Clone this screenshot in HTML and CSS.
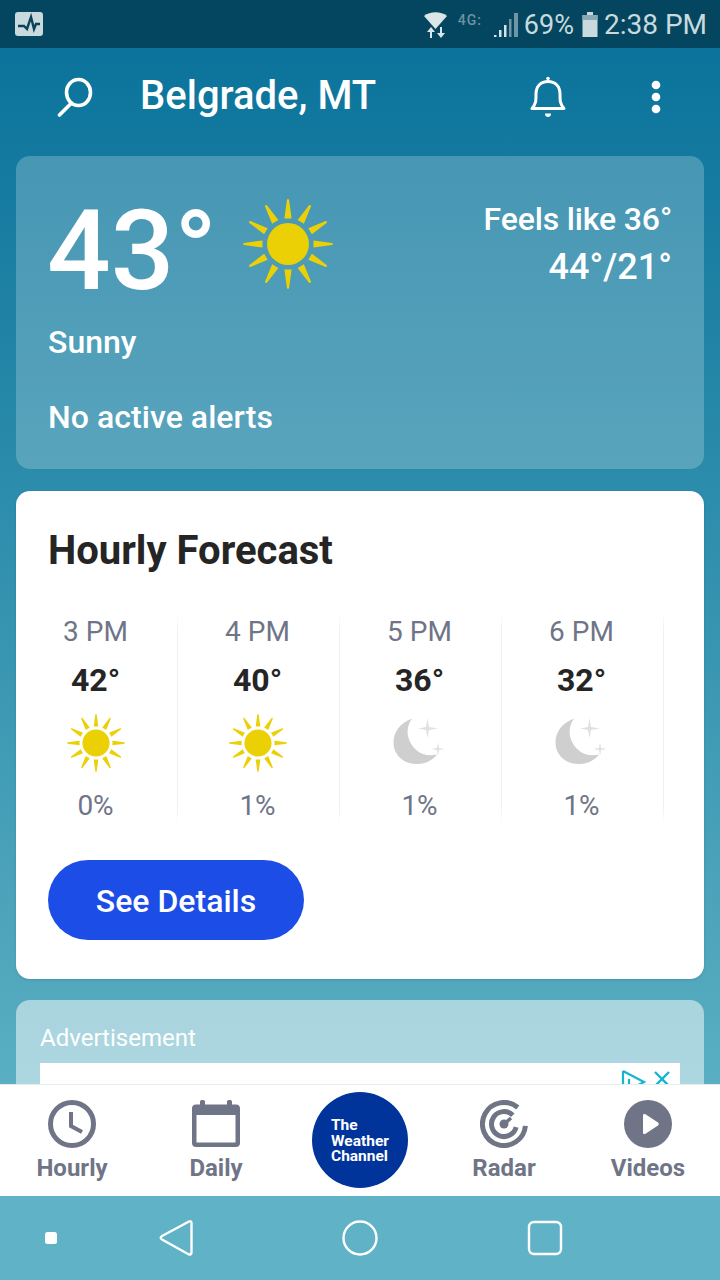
FILE: index.html
```html
<!DOCTYPE html>
<html lang="en">
<head>
<meta charset="utf-8">
<title>The Weather Channel</title>
<link rel="stylesheet" href="styles.css">
</head>
<body>
<svg class="defs" width="0" height="0" aria-hidden="true">
  <defs>
    <symbol id="sun" viewBox="-45 -45 90 90">
      <circle r="21" fill="#ebd006"/>
      <g fill="#ebd006">
        <path d="M-3.600-25.500H3.600L1.100-44Q0-46-1.100-44Z"/>
        <path d="M-3.600-25.500H3.600L1.100-44Q0-46-1.100-44Z" transform="rotate(30)"/>
        <path d="M-3.600-25.500H3.600L1.100-44Q0-46-1.100-44Z" transform="rotate(60)"/>
        <path d="M-3.600-25.500H3.600L1.100-44Q0-46-1.100-44Z" transform="rotate(90)"/>
        <path d="M-3.600-25.500H3.600L1.100-44Q0-46-1.100-44Z" transform="rotate(120)"/>
        <path d="M-3.600-25.500H3.600L1.100-44Q0-46-1.100-44Z" transform="rotate(150)"/>
        <path d="M-3.600-25.500H3.600L1.100-44Q0-46-1.100-44Z" transform="rotate(180)"/>
        <path d="M-3.600-25.500H3.600L1.100-44Q0-46-1.100-44Z" transform="rotate(210)"/>
        <path d="M-3.600-25.500H3.600L1.100-44Q0-46-1.100-44Z" transform="rotate(240)"/>
        <path d="M-3.600-25.500H3.600L1.100-44Q0-46-1.100-44Z" transform="rotate(270)"/>
        <path d="M-3.600-25.500H3.600L1.100-44Q0-46-1.100-44Z" transform="rotate(300)"/>
        <path d="M-3.600-25.500H3.600L1.100-44Q0-46-1.100-44Z" transform="rotate(330)"/>
      </g>
    </symbol>
    <symbol id="moon" viewBox="0 0 58 58">
      <path d="M21 4.500C9 9 2.500 18 2.500 28.500C2.500 41 13 50 25 50C34 50 41 47 46 40.500C32 44 21 35.500 17.500 24C15.500 17 17 10 21 4.500Z" fill="#cfcfcf"/>
      <path d="M36.500 4L38 13L47 14.500L38 16L36.500 24L35 16L27 14.500L35 13Z" fill="#e0e1e3"/>
      <path d="M47 28L48 34L54 35L48 36L47 42L46 36L40 35L46 34Z" fill="#e0e1e3"/>
    </symbol>
  </defs>
</svg>
<div class="app">
  <div class="status">
    <svg class="st-app" width="28" height="24" viewBox="0 0 28 24"><rect width="28" height="24" rx="3" fill="#c8dade"/><path d="M3 14H9L12 17L16 5L19 17L21 12H25" fill="none" stroke="#0b4258" stroke-width="2.400"/></svg>
    <div class="st-right">
      <svg class="st-wifi" width="24" height="27" viewBox="0 0 24 27"><path d="M0 4C6-1 17-1 23 4L11.500 17Z" fill="#dbe6e9"/><path d="M6 26V20H3L7 15L11 20H8V26ZM16 15V21H13L17 26L21 21H18V15Z" fill="#dbe6e9"/></svg>
      <span class="st-4g">4G:</span>
      <svg class="st-signal" width="25" height="26" viewBox="0 0 25 26"><path d="M0 25H2.500V23H0Z" fill="#d6e3e6"/><path d="M5 25H7.500V18H5ZM10 25H12.500V13H10Z" fill="#d6e3e6"/><path d="M15 25H17.500V7H15ZM20 25H24V1H20Z" fill="#6e96a6"/></svg>
      <span class="st-pct">69%</span>
      <svg class="st-batt" width="16" height="25" viewBox="0 0 16 25"><path d="M5 0H11V3H15.500V25H.5V3H5Z" fill="#c8dade"/><rect x=".5" y="3" width="15" height="5" fill="#88a8b4"/></svg>
      <span class="st-time">2:38 PM</span>
    </div>
  </div>

  <main class="main">
    <header class="top">
      <svg class="ic-search" width="40" height="40" viewBox="0 0 40 40" fill="none" stroke="#fff" stroke-width="3.600" stroke-linecap="round"><ellipse cx="22.500" cy="15.500" rx="12" ry="13"/><path d="M15.500 26L3.500 38"/></svg>
      <h1 class="city">Belgrade, MT</h1>
      <svg class="ic-bell" width="40" height="44" viewBox="0 0 40 44" fill="none" stroke="#fff" stroke-width="3"><path d="M4 33.500C8 29 8 26 8 19C8 11 13 6.500 20 6.500C27 6.500 32 11 32 19C32 26 32 29 36 33.500Z" stroke-linejoin="round"/><circle cx="20" cy="3.500" r="1.800" fill="#fff" stroke="none"/><path d="M17 38.500H23V39C23 41 21.500 42 20 42C18.500 42 17 41 17 39Z" fill="#fff" stroke="none"/></svg>
      <svg class="ic-more" width="10" height="36" viewBox="0 0 10 36" fill="#fff"><circle cx="5" cy="6" r="4.300"/><circle cx="5" cy="18" r="4.300"/><circle cx="5" cy="30" r="4.300"/></svg>
    </header>

    <section class="hero">
      <div class="hero-top">
        <div class="temp">43°</div>
        <svg class="sun-big" width="90" height="90"><use href="#sun"/></svg>
        <div class="feels">
          <div>Feels like 36°</div>
          <div class="hilo">44°/21°</div>
        </div>
      </div>
      <div class="cond">Sunny</div>
      <div class="alerts">No active alerts</div>
    </section>

    <section class="card">
      <h2 class="card-title">Hourly Forecast</h2>
      <div class="hours">
        <div class="hour"><div class="h-time">3 PM</div><div class="h-temp">42°</div><svg class="h-icon" width="58" height="58"><use href="#sun"/></svg><div class="h-pct">0%</div></div>
        <div class="hour"><div class="h-time">4 PM</div><div class="h-temp">40°</div><svg class="h-icon" width="58" height="58"><use href="#sun"/></svg><div class="h-pct">1%</div></div>
        <div class="hour"><div class="h-time">5 PM</div><div class="h-temp">36°</div><svg class="h-icon" width="58" height="58"><use href="#moon"/></svg><div class="h-pct">1%</div></div>
        <div class="hour"><div class="h-time">6 PM</div><div class="h-temp">32°</div><svg class="h-icon" width="58" height="58"><use href="#moon"/></svg><div class="h-pct">1%</div></div>
      </div>
      <button class="details">See Details</button>
    </section>

    <section class="ad">
      <div class="ad-label">Advertisement</div>
      <div class="ad-box">
        <svg class="ad-choice" width="26" height="22" viewBox="0 0 26 22" fill="none" stroke="#13b5cf" stroke-width="2.200"><path d="M2 2V21M2 2L23 13L8 21"/><path d="M8 10V17"/></svg>
        <svg class="ad-x" width="18" height="16" viewBox="0 0 18 16" fill="none" stroke="#13b5cf" stroke-width="2.400"><path d="M2 1L16 15M16 1L2 15"/></svg>
      </div>
    </section>
  </main>

  <nav class="tabs">
    <div class="tab">
      <svg width="48" height="48" viewBox="0 0 48 48" fill="none" stroke="#6f7587" stroke-width="5"><circle cx="24" cy="24" r="21.500"/><path d="M23 12V26L34 32" stroke-width="4"/></svg>
      <span>Hourly</span>
    </div>
    <div class="tab">
      <svg width="48" height="48" viewBox="0 0 48 48"><path d="M8 4.500V1.500C8-.5 13-.5 13 1.500V4.500H35V1.500C35-.5 40-.5 40 1.500V4.500H44C46.500 4.500 48 6 48 8.500V43C48 45.500 46.500 47 44 47H4C1.500 47 0 45.500 0 43V8.500C0 6 1.500 4.500 4 4.500Z" fill="#6f7587"/><rect x="4.500" y="15" width="39" height="27.500" fill="#fff"/></svg>
      <span>Daily</span>
    </div>
    <div class="logo"><span>The<br>Weather<br>Channel</span></div>
    <div class="tab">
      <svg width="48" height="48" viewBox="0 0 48 48" fill="none" stroke="#6f7587" stroke-width="5"><path d="M37.800 7.500A21.500 21.500 0 1 0 45.400 25.900"/><path d="M32.800 15.200A12.500 12.500 0 1 0 36.100 27.200"/><path d="M24 24L31 18" stroke-width="3.500"/><circle cx="24" cy="24" r="4.500" fill="#6f7587" stroke="none"/></svg>
      <span>Radar</span>
    </div>
    <div class="tab">
      <svg width="48" height="48" viewBox="0 0 48 48"><circle cx="24" cy="24" r="24" fill="#6f7587"/><path d="M19 15.500C19 14 20 13.500 21.500 14.300L34 22.500C35 23.300 35 24.700 34 25.500L21.500 33.700C20 34.500 19 34 19 32.500Z" fill="#fff"/></svg>
      <span>Videos</span>
    </div>
  </nav>

  <div class="sysnav">
    <svg width="14" height="14" viewBox="0 0 14 14"><rect x="1" y="1" width="12" height="12" rx="2.500" fill="#fff"/></svg>
    <svg class="sys-back" width="34" height="38" viewBox="0 0 34 38" fill="none" stroke="#fff" stroke-width="2.400" stroke-linejoin="round"><path d="M30 2.500C31.500 1.800 32.500 2.500 32.500 4V33.500C32.500 35.500 31 36 29.500 35.200L3 20.500C1.300 19.500 1.300 18 3 17Z"/></svg>
    <svg class="sys-home" width="36" height="36" viewBox="0 0 36 36" fill="none" stroke="#fff" stroke-width="2.400"><circle cx="18" cy="18" r="16.500"/></svg>
    <svg class="sys-recent" width="36" height="36" viewBox="0 0 36 36" fill="none" stroke="#fff" stroke-width="2.400"><rect x="2" y="2" width="32" height="32" rx="5"/></svg>
  </div>
</div>
</body>
</html>
```

FILE: styles.css
```css
* { box-sizing: border-box; }
html, body { margin: 0; padding: 0; }
body { width: 720px; height: 1280px; overflow: hidden; font-family: Roboto, "Liberation Sans", sans-serif; }
.defs { display: block; height: 0; }
.app { width: 720px; height: 1280px; display: flex; flex-direction: column; background: linear-gradient(180deg, #0b739b 48px, #62b5c6 1200px); }

.status { height: 48px; flex: none; display: flex; align-items: center; justify-content: space-between; padding: 0 13px 0 15px; background: #04465f; color: #c8dade; }
.st-right { display: flex; align-items: center; }
.st-wifi { margin-top: 2px; }
.st-4g { font-size: 14px; line-height: 12px; letter-spacing: 1px; width: 28px; margin: -9px 8px 0 10px; color: #6d93a3; font-weight: 500; }
.st-signal { margin-top: 1px; }
.st-pct { font-size: 27px; line-height: 32px; margin-left: 5px; margin-top: 2px; }
.st-batt { margin-left: 8px; }
.st-time { font-size: 28px; line-height: 32px; margin-left: 6px; margin-top: 2px; }

.main { flex: 1; min-height: 0; overflow: hidden; padding: 0 16px; }
.top { height: 108px; display: flex; align-items: center; margin: 0 -16px; padding: 0 59px 0 56px; }
.city { margin: 0 0 12px 44px; flex: 1; font-size: 40px; line-height: 48px; font-weight: 500; color: #fff; }
.ic-search { margin-bottom: 10px; }
.ic-bell { margin-right: 83px; margin-bottom: 10px; }
.ic-more { margin-bottom: 11px; }

.hero { height: 313px; border-radius: 14px; background: rgba(255,255,255,.22); padding: 35px 32px 0 32px; color: #fff; }
.hero-top { display: flex; align-items: flex-start; height: 125px; }
.temp { font-size: 112px; line-height: 120px; font-weight: 500; margin-left: -1px; }
.sun-big { margin: 8px 0 0 26px; }
.feels { margin-left: auto; text-align: right; font-size: 32px; letter-spacing: -.15px; line-height: 48px; font-weight: 500; margin-top: 4px; }
.hilo { font-size: 36px; letter-spacing: 0; }
.cond { font-size: 32px; line-height: 40px; font-weight: 500; margin-top: 6px; }
.alerts { font-size: 32px; letter-spacing: .05px; line-height: 40px; font-weight: 500; margin-top: 35px; }

.card { height: 488px; margin-top: 22px; border-radius: 14px; background: #fff; box-shadow: 0 1px 3px rgba(0,0,0,.12); padding-top: 36px; }
.card-title { margin: 0 0 0 32px; font-size: 40px; line-height: 48px; font-weight: 700; color: #252525; }
.hours { display: flex; margin-top: 39px; }
.hour { width: 162px; height: 210px; padding-right: 2px; border-right: 1px solid; border-image: linear-gradient(180deg, transparent, #f0f0f1 8%, #f0f0f1 92%, transparent) 1; display: flex; flex-direction: column; align-items: center; }
.h-time { font-size: 28px; line-height: 36px; color: #6f7587; }
.h-temp { font-size: 32px; line-height: 40px; font-weight: 700; color: #252525; margin-top: 10px; }
.h-icon { margin-top: 14px; flex: none; }
.h-pct { font-size: 28px; line-height: 36px; color: #6f7587; margin-top: 16px; }
.details { display: block; margin: 36px 0 0 32px; width: 256px; height: 80px; border: 0; border-radius: 40px; background: #1c4de6; color: #fff; font-family: inherit; font-size: 32px; font-weight: 500; padding: 2px 0 0; }

.ad { height: 160px; margin-top: 21px; border-radius: 14px; background: rgba(255,255,255,.5); padding: 22px 24px 0; }
.ad-label { font-size: 24px; line-height: 32px; color: #fff; }
.ad-box { height: 80px; margin-top: 9px; background: #fff; position: relative; }
.ad-choice { position: absolute; right: 33px; top: 6px; }
.ad-x { position: absolute; right: 9px; top: 8px; }

.tabs { flex: none; height: 112px; background: #fff; display: flex; border-top: 1px solid #e8ecee; }
.tab { width: 144px; display: flex; flex-direction: column; align-items: center; padding-top: 15px; font-size: 24px; line-height: 32px; font-weight: 700; color: #6f7587; }
.tab span { margin-top: 4px; }
.logo { width: 96px; height: 96px; margin: 7px 24px 0; border-radius: 50%; background: #00349b; color: #fff; font-size: 15.500px; line-height: 15.500px; font-weight: 700; padding: 26px 0 0 19px; }
.tab:nth-child(2) { margin-right: -24px; padding-right: 24px; width: 168px; }

.sysnav { flex: none; height: 84px; display: flex; align-items: center; padding-left: 44px; background: #60b3c6; }
.sys-back { margin-left: 101px; }
.sys-home { margin-left: 149px; }
.sys-recent { margin-left: 149px; }
```
